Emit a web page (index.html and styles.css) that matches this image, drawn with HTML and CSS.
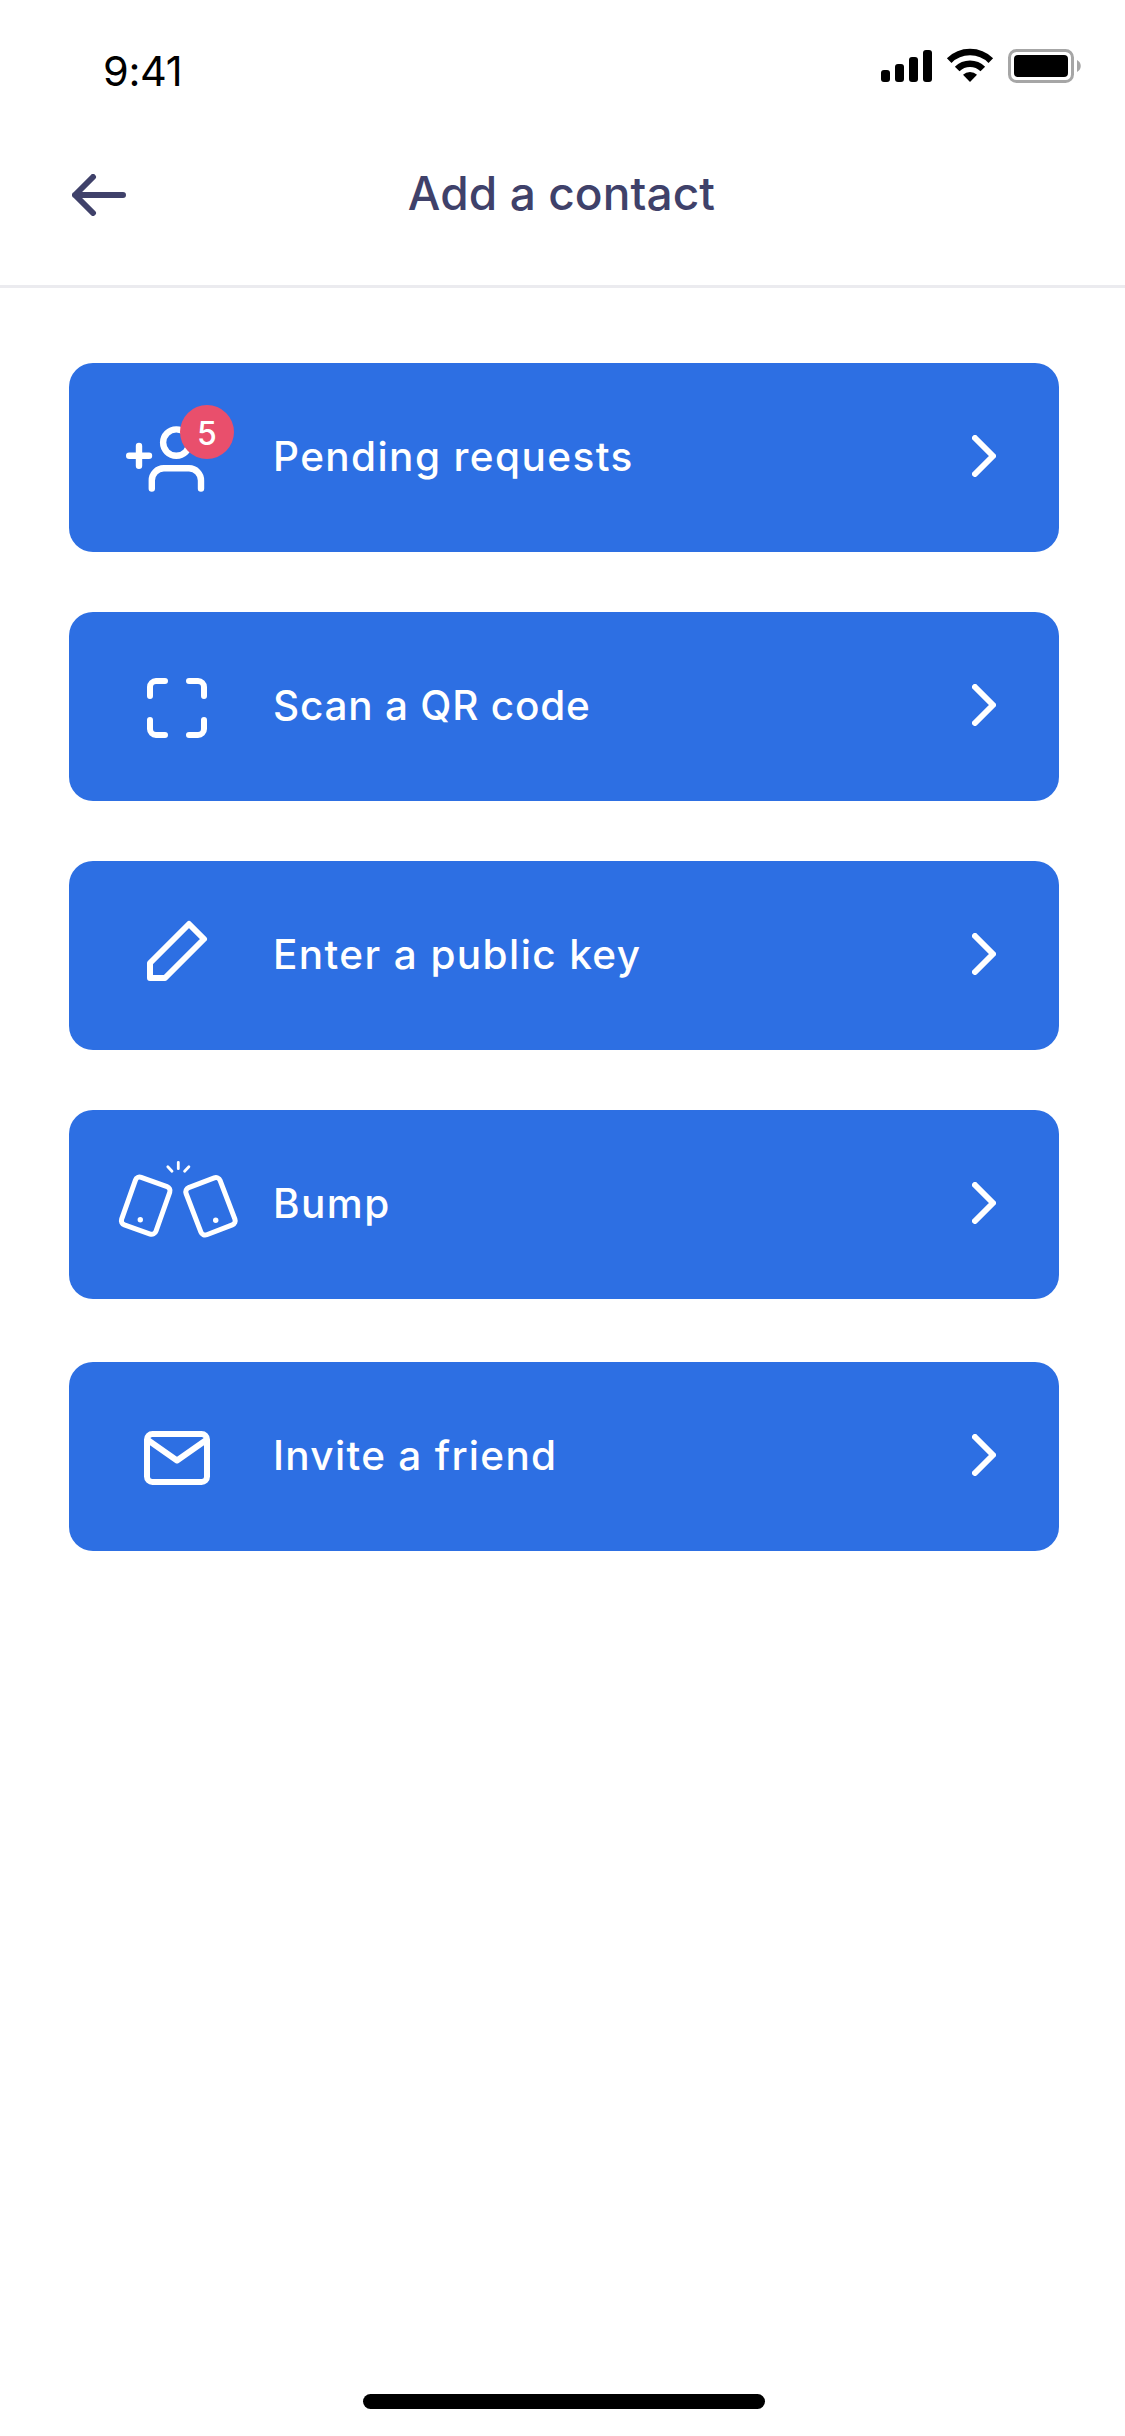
FILE: index.html
```html
<!DOCTYPE html>
<html lang="en">
<head>
<meta charset="utf-8">
<title>Add a contact</title>
<link rel="stylesheet" href="styles.css">
</head>
<body>
<div class="screen">
  <header class="status">
    <span class="time">9:41</span>
    <svg class="indicators" viewBox="881 43 201 46" width="201" height="46">
      <rect x="881" y="70" width="9" height="12" rx="3"/>
      <rect x="895" y="64" width="9" height="18" rx="3"/>
      <rect x="909" y="57" width="9" height="25" rx="3"/>
      <rect x="923" y="50" width="9" height="32" rx="3"/>
      <g fill="none" stroke="#000" stroke-width="6.5">
        <path d="M949.2 60.6A29.5 29.5 0 0 1 990.8 60.6"/>
        <path d="M957.2 69A18 18 0 0 1 982.8 69"/>
      </g>
      <path d="M970 82l-7-7.2a10 10 0 0 1 14 0z"/>
      <rect x="1009.5" y="50.5" width="63" height="31" rx="7" fill="none" stroke="#a6a6a6" stroke-width="3"/>
      <rect x="1014" y="55" width="54" height="22" rx="4"/>
      <path d="M1077 60c5 2.500 5 9.500 0 12z" fill="#a6a6a6"/>
    </svg>
  </header>
  <nav class="topbar">
    <svg class="back" viewBox="0 0 54 42" width="54" height="42"><path d="M51 21H3M21 3L3 21l18 18"/></svg>
    <h1 class="title">Add a contact</h1>
  </nav>
  <main class="menu">
    <a class="card">
      <svg class="icon" viewBox="108 363 165 189">
        <g stroke-width="6.4">
          <circle cx="176.300" cy="442.600" r="13.200"/>
          <path d="M151.800 488.500V480.500A12 12 0 0 1 163.800 468.300H189A12 12 0 0 1 201 480.500V488.500"/>
          <path d="M129.200 455.800H149M139 446V465.800"/>
        </g>
      </svg>
      <span class="badge">5</span>
      <span class="label">Pending requests</span>
      <svg class="chevron" viewBox="0 0 24 42"><path d="M3 3l18 18L3 39"/></svg>
    </a>
    <a class="card">
      <svg class="icon" viewBox="108 612 165 189">
        <path d="M150 696V687A6 6 0 0 1 156 681H165M189 681H198A6 6 0 0 1 204 687V696M204 720V729A6 6 0 0 1 198 735H189M165 735H156A6 6 0 0 1 150 729V720"/>
      </svg>
      <span class="label label-scan">Scan a QR code</span>
      <svg class="chevron" viewBox="0 0 24 42"><path d="M3 3l18 18L3 39"/></svg>
    </a>
    <a class="card">
      <svg class="icon" viewBox="108 861 165 189">
        <path d="M189 924L204 939L165 978H150V963Z"/>
      </svg>
      <span class="label">Enter a public key</span>
      <svg class="chevron" viewBox="0 0 24 42"><path d="M3 3l18 18L3 39"/></svg>
    </a>
    <a class="card">
      <svg class="icon" viewBox="108 1110 165 189">
        <g stroke-width="5">
          <rect x="127.500" y="1180.500" width="36.400" height="50.400" rx="4.500" transform="rotate(19.500 145.700 1205.700)"/>
          <rect x="192.300" y="1181.100" width="36.400" height="50.400" rx="4.500" transform="rotate(-21 210.500 1206.300)"/>
        </g>
        <path stroke-width="2.800" d="M178.300 1162.300V1168.700M167.800 1166.700L172 1171.200M188.900 1166.700L184.600 1171.200"/>
        <circle class="dot" cx="140.300" cy="1219.700" r="2.700"/>
        <circle class="dot" cx="215.700" cy="1220.300" r="2.700"/>
      </svg>
      <span class="label">Bump</span>
      <svg class="chevron" viewBox="0 0 24 42"><path d="M3 3l18 18L3 39"/></svg>
    </a>
    <a class="card last">
      <svg class="icon" viewBox="108 1362 165 189">
        <rect x="147" y="1434" width="60" height="48" rx="5.500"/>
        <path d="M148.500 1440.500L177 1460.500L205.500 1440.500"/>
      </svg>
      <span class="label label-invite">Invite a friend</span>
      <svg class="chevron" viewBox="0 0 24 42"><path d="M3 3l18 18L3 39"/></svg>
    </a>
  </main>
  <div class="home"></div>
</div>
</body>
</html>
```
FILE: styles.css
```css
* { box-sizing: border-box; }
body { margin: 0; background: #fff; font-family: Inter, "Liberation Sans", sans-serif; }
.screen { width: 1125px; height: 2436px; display: flex; flex-direction: column; }
.status { height: 132px; padding: 43px 43px 0 103px; display: flex; justify-content: space-between; align-items: flex-start; }
.time { font-size: 41.500px; line-height: 56px; letter-spacing: -0.3px; color: #000; }
.indicators { display: block; }
.topbar { height: 156px; padding: 0 72px 31px; border-bottom: 3px solid #ebebef; display: grid; grid-template-columns: 54px 1fr 54px; align-items: center; }
.back { margin-top: 4px; fill: none; stroke: #3f416a; stroke-width: 6; stroke-linecap: round; stroke-linejoin: round; }
.title { margin: 0; padding-right: 2px; text-align: center; font-size: 46px; font-weight: 450; line-height: 54px; letter-spacing: 0.1px; color: #3f416a; white-space: nowrap; }
.menu { padding: 75px 66px 0 69px; display: flex; flex-direction: column; gap: 60px; }
.card { position: relative; height: 189px; border-radius: 24px; background: #2d6fe3; display: flex; align-items: center; padding: 0 63px 0 39px; }
.last { margin-top: 3px; }
.icon { width: 165px; height: 189px; flex: none; fill: none; stroke: #fff; stroke-width: 6; stroke-linecap: round; stroke-linejoin: round; }
.dot { fill: #fff; stroke: none; }
.badge { position: absolute; left: 111px; top: 42px; width: 54px; height: 54px; border-radius: 50%; background: #e94f6c; color: #fff; font-size: 32px; font-weight: 500; line-height: 57px; text-align: center; }
.label { flex: 1; margin-bottom: 1px; color: #fff; font-size: 40.500px; font-weight: 500; line-height: 48px; letter-spacing: 1.400px; white-space: nowrap; }
.label-scan { letter-spacing: 0.780px; }
.label-invite { letter-spacing: 1.300px; }
.chevron { width: 24px; height: 42px; margin-bottom: 3px; fill: none; stroke: #fff; stroke-width: 6; stroke-linecap: round; stroke-linejoin: round; }
.home { width: 402px; height: 15px; border-radius: 7.500px; background: #000; margin: auto 0 27px 363px; }
```
